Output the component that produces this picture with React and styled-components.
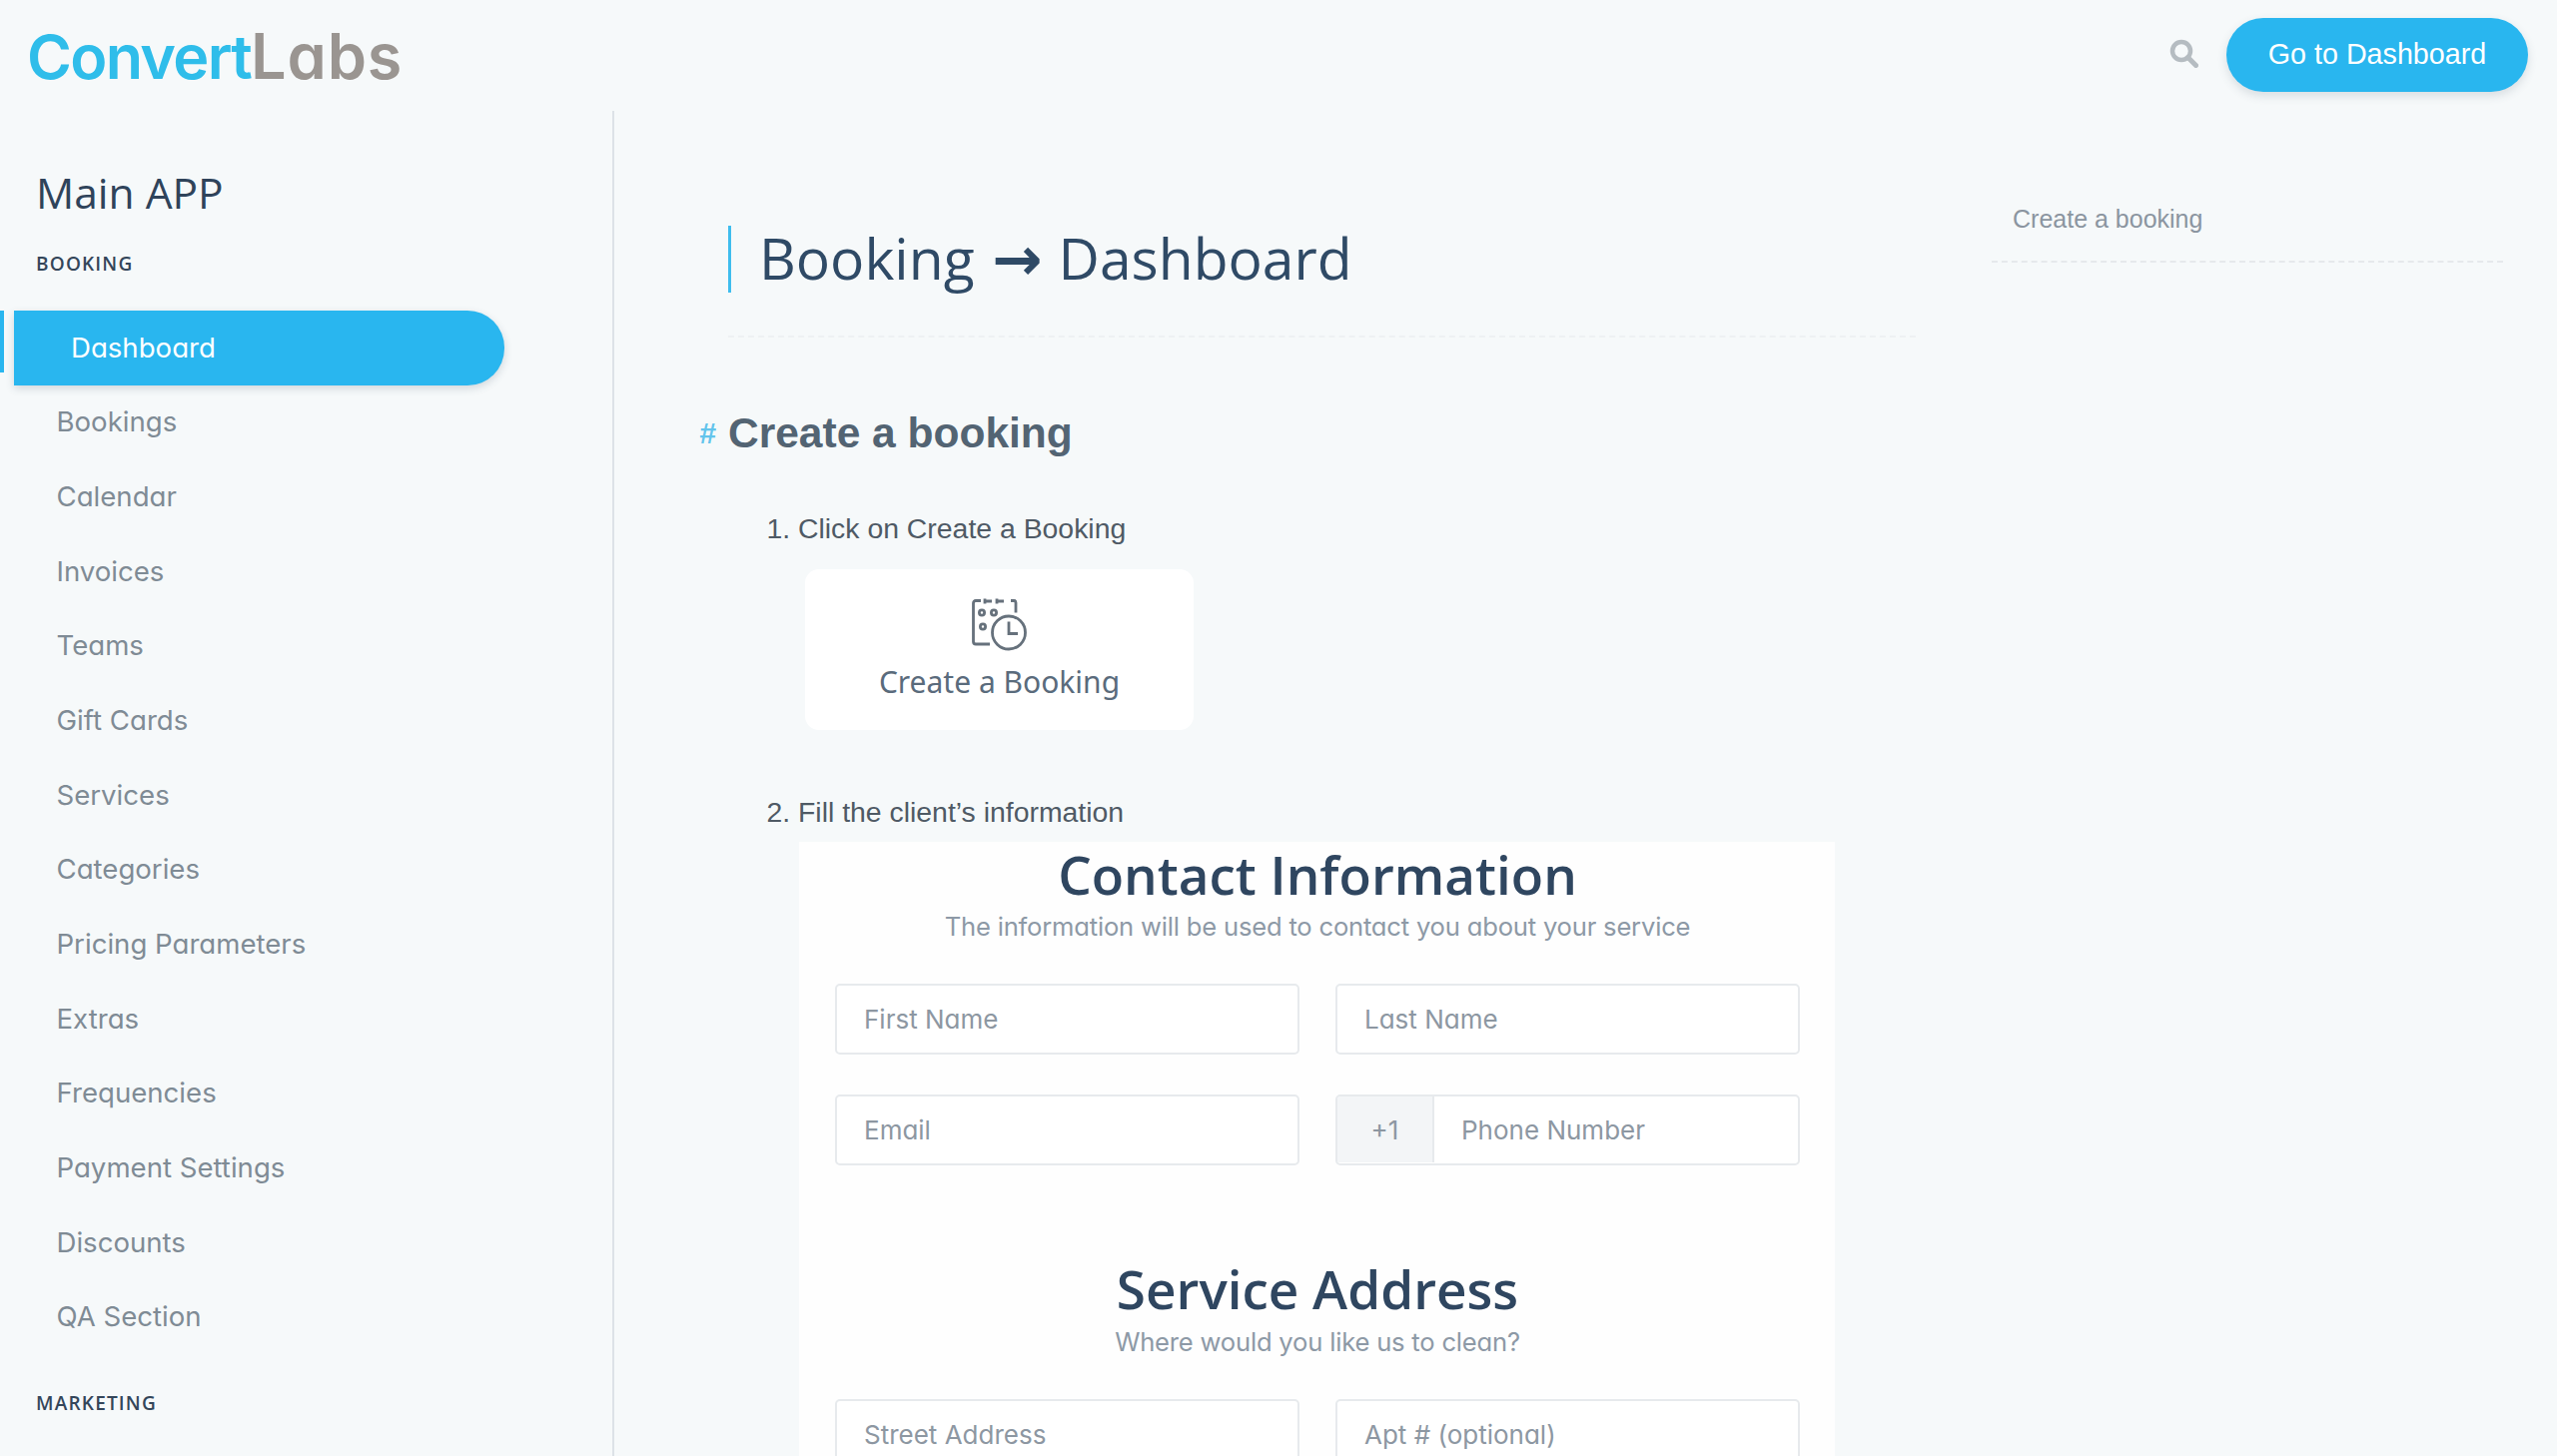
import React from "react";
import styled, { createGlobalStyle } from "styled-components";

const Global = createGlobalStyle`
  html, body { margin: 0; padding: 0; background: #f6f9fa; height: 1458px; overflow: hidden; }
  * { box-sizing: border-box; }
`;
const round = `font-family: Inter, "Open Sans", sans-serif; font-feature-settings: "cv11" 1;`;

const Page = styled.div`height: 1458px; overflow: hidden; background: #f6f9fa; font-family: "Liberation Sans", Arial, sans-serif;`;
const Header = styled.header`height: 111px; display: flex; align-items: flex-start; justify-content: space-between; padding: 18px 29px 0 27px;`;
const Logo = styled.div`${round} font-size: 61px; line-height: 78px; font-weight: 600; letter-spacing: -1.7px; color: #2fbdea; margin-top: -1px;`;
const LogoGrey = styled.span`font-size: 63px; letter-spacing: 0.8px; color: #9a9591;`;
const HeaderActions = styled.div`display: flex; align-items: center; gap: 28px;`;
const SearchIcon = styled.svg`width: 29px; height: 29px; margin-top: -3px; display: block;`;
const CtaButton = styled.button`
  width: 302px; height: 74px; border: 0; border-radius: 37px; background: #29b6ef; color: #fff;
  font: 400 28.7px "Liberation Sans", Arial, sans-serif; box-shadow: 0 4px 10px rgba(60, 80, 100, .16); padding-bottom: 3px;
`;
const Body = styled.div`display: flex; height: 1347px;`;
const Sidebar = styled.nav`width: 615px; flex: none; border-right: 2px solid #dde2e7; padding-top: 52px;`;
const SidebarTitle = styled.div`font: 400 42.5px/60px "Open Sans", sans-serif; color: #2f435a; padding-left: 36px;`;
const SectionLabel = styled.div`
  font: 600 19px/24px "Open Sans", sans-serif; letter-spacing: 1.2px; color: #34465a; padding-left: 36px;
  margin-top: ${p => p.$top}px;
`;
const NavList = styled.div`margin-top: 35px;`;
const NavItem = styled.div`
  ${round} position: relative; height: 74.67px; display: flex; align-items: center; font-size: 27.6px;
  color: #7f8b95; padding: 0 0 1px 56.5px;
  ${p => p.$active && `
    color: #fff; background: #29b6ef; width: 491px; margin-left: 14px; padding-left: 57px;
    border-radius: 0 37px 37px 0; box-shadow: 0 3px 8px rgba(60, 80, 100, .2);
    &::before { content: ""; position: absolute; left: -14px; top: 0; width: 4px; height: 62px; background: #29b6ef; }
  `}
`;
const Main = styled.main`width: 1303px; flex: none; padding: 115px 0 0 114px;`;
const Title = styled.h1`
  margin: 0; height: 67px; border-left: 3px solid #3fbdee; padding-left: 28px;
  font: 400 57px/65px "Open Sans", sans-serif; color: #2f4a66; white-space: nowrap;
`;
const Arrow = styled.span`font-family: "DejaVu Sans", sans-serif; font-size: 60px; line-height: 60px; font-weight: 700; margin: 0 1px 0 3px;`;
const Dashed = styled.div`border-top: 2px dashed #eef1f3; margin-top: 43px;`;
const Heading = styled.h2`
  position: relative; margin: 71px 0 0; font: 700 42.5px/50px "Liberation Sans", Arial, sans-serif; color: #536473;
`;
const Hash = styled.span`position: absolute; left: -29px; top: 0; font-size: 30px; font-style: italic; color: #63c4ec;`;
const Steps = styled.ol`margin: 50px 0 0; padding: 0 0 0 70px; font-size: 28.4px; line-height: 40px; color: #4f5a65;`;
const Step = styled.li`& + & { margin-top: 62px; }`;
const BookingCard = styled.div`
  width: 389px; height: 161px; margin: 21px 0 0 7px; background: #fff; border-radius: 14px;
  display: flex; flex-direction: column; align-items: center; padding-top: 28px;
`;
const CardIcon = styled.svg`width: 55px; height: 55px; display: block;`;
const CardLabel = styled.div`font: 400 30px/40px "Noto Sans", "Open Sans", sans-serif; color: #5a6b7c; margin-top: 10px;`;
const FormOffset = styled.div`margin-left: 70px;`;
const FormPanel = styled.div`width: 1037px; margin: 10px 0 0 1px; background: #fefefe; padding: 3px 35px 0 36px;`;
const FormTitle = styled.div`
  font: 600 53px/60px "Open Sans", sans-serif; color: #2f4660; text-align: center; margin-top: ${p => p.$top || 0}px;
`;
const FormSub = styled.div`
  ${round} font-size: 25.6px; line-height: 36px; color: #8d99a6; text-align: center; letter-spacing: -.2px; margin-top: ${p => p.$top}px;
`;
const FieldGrid = styled.div`display: grid; grid-template-columns: 465px 465px; gap: 40px 36px; margin-top: ${p => p.$top}px;`;
const Field = styled.div`
  ${round} height: 71px; background: #fff; border: 2px solid #e7eaed; border-radius: 5px; display: flex; align-items: center;
  padding: 0 0 1px ${p => p.$prefix ? 0 : 27}px; font-size: 26px; color: #8d97a2; overflow: hidden;
`;
const Prefix = styled.span`
  width: 97px; height: 100%; background: #f3f5f7; border-right: 2px solid #e7eaed; display: flex; align-items: center;
  justify-content: center; margin-right: 27px; color: #8d97a2;
`;
const Toc = styled.aside`width: 512px; margin-left: 76px; flex: none; padding-top: 88px;`;
const TocLink = styled.div`font-size: 25px; line-height: 40px; color: #8b95a0; padding: 0 0 22px 21px; border-bottom: 2px dashed #e6e9ec;`;

const nav = ["Bookings","Calendar","Invoices","Teams","Gift Cards","Services","Categories","Pricing Parameters","Extras","Frequencies","Payment Settings","Discounts","QA Section"];

export default function App() {
  return (
    <Page>
      <Global />
      <Header>
        <Logo>Convert<LogoGrey>Labs</LogoGrey></Logo>
        <HeaderActions>
          <SearchIcon viewBox="0 0 29 29" fill="none" stroke="#b5bcc1">
            <circle cx="12" cy="12" r="9" strokeWidth="4.5" />
            <path d="M18.5 18.5 L26.5 26.5" strokeWidth="5" strokeLinecap="round" />
          </SearchIcon>
          <CtaButton>Go to Dashboard</CtaButton>
        </HeaderActions>
      </Header>
      <Body>
        <Sidebar>
          <SidebarTitle>Main APP</SidebarTitle>
          <SectionLabel $top={29}>BOOKING</SectionLabel>
          <NavList>
            <NavItem $active>Dashboard</NavItem>
            {nav.map(n => <NavItem key={n}>{n}</NavItem>)}
          </NavList>
          <SectionLabel $top={37}>MARKETING</SectionLabel>
        </Sidebar>
        <Main>
          <Title>Booking <Arrow>→</Arrow> Dashboard</Title>
          <Dashed />
          <Heading><Hash>#</Hash>Create a booking</Heading>
          <Steps>
            <Step>
              Click on Create a Booking
              <BookingCard>
                <CardIcon viewBox="0 0 55 52" fill="none" stroke="#66717c" strokeWidth="2.800">
                  <path d="M9 2H4Q1.500 2 1.500 4.500V43Q1.500 45.500 4 45.500H18" />
                  <path d="M13 0V5M13 2.500H20M25 0V5M25 2.500H32M39 2H42Q44 2 44 4V14" />
                  <circle cx="10" cy="14" r="2.600" />
                  <circle cx="22" cy="14" r="2.600" />
                  <circle cx="11" cy="28" r="2.600" />
                  <circle cx="37" cy="34" r="16.500" />
                  <path d="M37 23V35H46" />
                </CardIcon>
                <CardLabel>Create a Booking</CardLabel>
              </BookingCard>
            </Step>
            <Step>
              Fill the client’s information
            </Step>
          </Steps>
          <FormOffset>
            <FormPanel>
              <FormTitle>Contact Information</FormTitle>
              <FormSub $top={4}>The information will be used to contact you about your service</FormSub>
              <FieldGrid $top={39}>
                <Field>First Name</Field>
                <Field>Last Name</Field>
                <Field>Email</Field>
                <Field $prefix><Prefix>+1</Prefix>Phone Number</Field>
              </FieldGrid>
              <FormTitle $top={94}>Service Address</FormTitle>
              <FormSub $top={5}>Where would you like us to clean?</FormSub>
              <FieldGrid $top={39}>
                <Field>Street Address</Field>
                <Field>Apt # (optional)</Field>
              </FieldGrid>
            </FormPanel>
          </FormOffset>
        </Main>
        <Toc><TocLink>Create a booking</TocLink></Toc>
      </Body>
    </Page>
  );
}
